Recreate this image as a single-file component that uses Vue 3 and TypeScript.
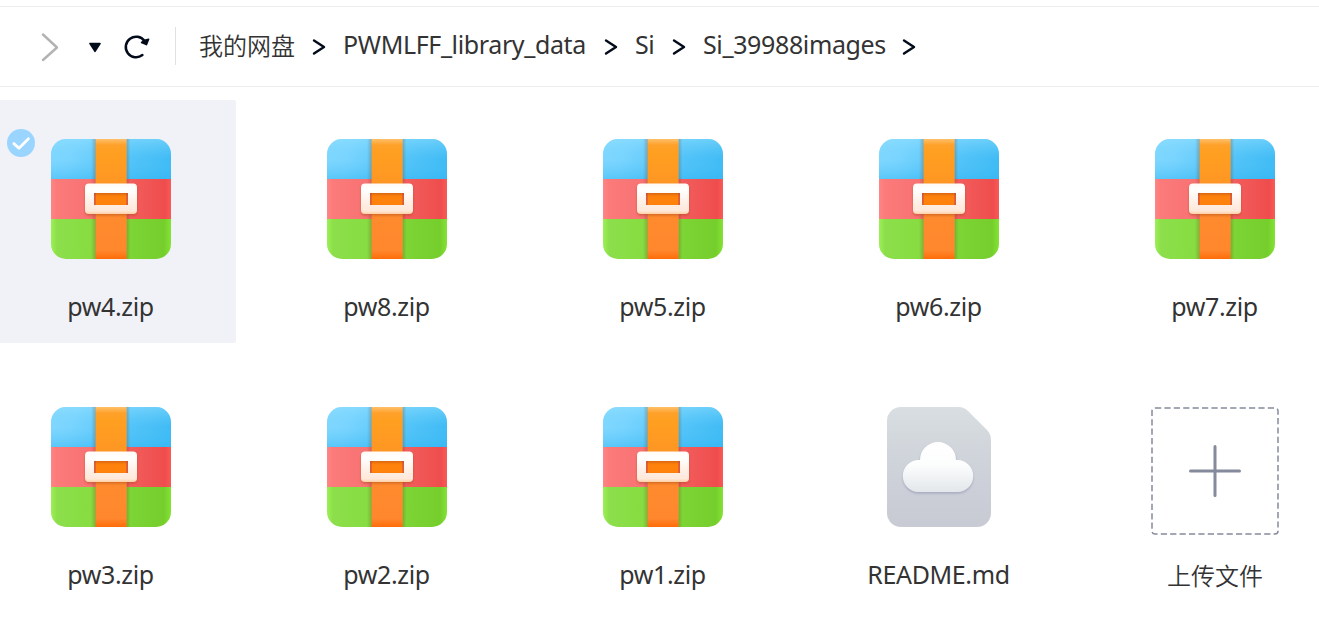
<script setup lang="ts">
interface Crumb {
  label: string
  kind: string
}
interface FileItem {
  name: string
  type: 'zip' | 'doc' | 'upload'
  selected?: boolean
}

const crumbs: Crumb[] = [
  { label: '我的网盘', kind: 'root' },
  { label: 'PWMLFF_library_data', kind: 'library' },
  { label: 'Si', kind: 'element' },
  { label: 'Si_39988images', kind: 'images' },
]

const files: FileItem[] = [
  { name: 'pw4.zip', type: 'zip', selected: true },
  { name: 'pw8.zip', type: 'zip' },
  { name: 'pw5.zip', type: 'zip' },
  { name: 'pw6.zip', type: 'zip' },
  { name: 'pw7.zip', type: 'zip' },
  { name: 'pw3.zip', type: 'zip' },
  { name: 'pw2.zip', type: 'zip' },
  { name: 'pw1.zip', type: 'zip' },
  { name: 'README.md', type: 'doc' },
  { name: '上传文件', type: 'upload' },
]
</script>

<template>
  <div class="page">
    <svg class="defs" width="0" height="0" aria-hidden="true">
      <defs>
        <clipPath id="zipClip"><rect width="120" height="120" rx="15" /></clipPath>
        <linearGradient id="zipBlue" x1="0" y1="0" x2="120" y2="40" gradientUnits="userSpaceOnUse">
          <stop offset="0" stop-color="#86daff" />
          <stop offset=".2" stop-color="#7dd6ff" />
          <stop offset=".5" stop-color="#5bc8fa" />
          <stop offset="1" stop-color="#36b7f3" />
        </linearGradient>
        <linearGradient id="zipBlueV" x1="0" y1="0" x2="0" y2="1">
          <stop offset="0" stop-color="#8fdeff" stop-opacity=".55" />
          <stop offset=".5" stop-color="#62cafa" stop-opacity=".15" />
          <stop offset="1" stop-color="#38b8f4" stop-opacity=".55" />
        </linearGradient>
        <linearGradient id="zipRed">
          <stop offset="0" stop-color="#ff8585" />
          <stop offset=".05" stop-color="#fb7a7a" />
          <stop offset=".35" stop-color="#f87272" />
          <stop offset=".7" stop-color="#f25b5b" />
          <stop offset=".95" stop-color="#ef4d4d" />
          <stop offset="1" stop-color="#f85a57" />
        </linearGradient>
        <linearGradient id="zipGreen">
          <stop offset="0" stop-color="#9cf055" />
          <stop offset=".05" stop-color="#8cdf4b" />
          <stop offset=".35" stop-color="#86dc40" />
          <stop offset=".94" stop-color="#75ce2c" />
          <stop offset="1" stop-color="#84e334" />
        </linearGradient>
        <linearGradient id="zipStrap" x1="0" y1="0" x2="0" y2="1">
          <stop offset="0" stop-color="#ffc06a" />
          <stop offset=".05" stop-color="#ffa12a" />
          <stop offset=".12" stop-color="#ff9f20" />
          <stop offset=".4" stop-color="#ff9524" />
          <stop offset=".65" stop-color="#ff8b2e" />
          <stop offset=".93" stop-color="#ff872d" />
          <stop offset="1" stop-color="#ff6c08" />
        </linearGradient>
        <linearGradient id="zipShadeL"><stop offset="0" stop-color="#653b20" stop-opacity="0" /><stop offset="1" stop-color="#653b20" stop-opacity=".28" /></linearGradient>
        <linearGradient id="zipShadeR"><stop offset="0" stop-color="#653b20" stop-opacity=".28" /><stop offset="1" stop-color="#653b20" stop-opacity="0" /></linearGradient>
        <linearGradient id="zipBuckle" x1="0" y1="0" x2="0" y2="1">
          <stop offset="0" stop-color="#fffaf5" />
          <stop offset=".2" stop-color="#ffffff" />
          <stop offset=".6" stop-color="#fff0e7" />
          <stop offset=".9" stop-color="#ffe8d9" />
          <stop offset="1" stop-color="#ffcfa2" />
        </linearGradient>
        <filter id="buckleShadow" x="-20%" y="-20%" width="140%" height="160%">
          <feDropShadow dx="0" dy="1.5" stdDeviation="1.3" flood-color="#a8400c" flood-opacity=".5" />
        </filter>
        <linearGradient id="docBody" x1="0" y1="0" x2="0" y2="1">
          <stop offset="0" stop-color="#d8dee1" />
          <stop offset=".45" stop-color="#cfd3da" />
          <stop offset="1" stop-color="#c8cad4" />
        </linearGradient>
        <linearGradient id="docCloud" x1="0" y1="0" x2="0" y2="1">
          <stop offset="0" stop-color="#ffffff" />
          <stop offset=".45" stop-color="#fcfdfd" />
          <stop offset="1" stop-color="#e3e7ea" />
        </linearGradient>
        <filter id="cloudShadow" x="-20%" y="-20%" width="140%" height="150%">
          <feDropShadow dx="0" dy="1.6" stdDeviation="1.2" flood-color="#9a9eb8" flood-opacity=".75" />
        </filter>
      </defs>
    </svg>

    <header class="toolbar">
      <svg class="forward" width="20" height="30" viewBox="0 0 20 30">
        <path d="M3 2.5 17 15.5 3 28" />
      </svg>
      <svg class="caret" width="14" height="12" viewBox="0 0 14 12">
        <path d="M2 1.5h10L7 9.3Z" />
      </svg>
      <svg class="reload" width="28" height="26" viewBox="0 0 28 26">
        <path class="arc" d="M19.4 21.1A10.3 10.3 0 1 1 21.5 7" />
        <path class="fill" d="M18.600 8.500 23.400 10.600 25.600 5.200 21.800 6.200Z" />
      </svg>
      <span class="divider"></span>
      <nav class="crumbs">
        <div v-for="c in crumbs" :key="c.label" class="crumb" :class="c.kind">
          <span class="label">{{ c.label }}</span>
          <svg class="sep" width="14" height="18" viewBox="0 0 14 18">
            <path d="M2 2.4 12 9 2 15.6" />
          </svg>
        </div>
      </nav>
    </header>

    <main class="grid">
      <article v-for="f in files" :key="f.name" class="tile" :class="[f.type, { selected: f.selected }]">
        <svg v-if="f.selected" class="check" width="28" height="28" viewBox="0 0 28 28">
          <circle cx="14" cy="14" r="14" />
          <path d="M6.9 14.6 12 19.2 21.4 9.7" />
        </svg>

        <svg v-if="f.type === 'zip'" class="icon" width="120" height="120" viewBox="0 0 120 120">
          <g clip-path="url(#zipClip)">
            <rect width="120" height="40.3" fill="url(#zipBlue)" />
            <rect width="120" height="40.3" fill="url(#zipBlueV)" />
            <rect y="40" width="120" height="40.3" fill="url(#zipRed)" />
            <rect y="80" width="120" height="40" fill="url(#zipGreen)" />
            <rect x="40" width="5" height="120" fill="url(#zipShadeL)" />
            <rect x="75.4" width="4" height="120" fill="url(#zipShadeR)" />
            <rect x="44.6" width="31" height="120" fill="url(#zipStrap)" />
            <rect x="43" y="53.5" width="34" height="13" fill="#ff820c" />
            <path d="M43 54h2v12h-2zM75 54h2v12h-2z" fill="#e5643b" />
          </g>
          <path
            filter="url(#buckleShadow)"
            fill="url(#zipBuckle)"
            fill-rule="evenodd"
            d="M38 44.6H82a4 4 0 0 1 4 4V71a4 4 0 0 1-4 4H38a4 4 0 0 1-4-4V48.600a4 4 0 0 1 4-4ZM43 54V66H77V54Z"
          />
        </svg>

        <svg v-else-if="f.type === 'doc'" class="icon" width="104" height="120" viewBox="0 0 104 120">
          <path
            fill="url(#docBody)"
            d="M14 0H71.500Q77 0 81 4L100 23Q104 27 104 33V106A14 14 0 0 1 90 120H14A14 14 0 0 1 0 106V14A14 14 0 0 1 14 0Z"
          />
          <path
            filter="url(#cloudShadow)"
            fill="url(#docCloud)"
            d="M33 53A18 18 0 0 1 69 53H70.500A15.700 16 0 0 1 70.500 85H31.500A15.700 16 0 0 1 31.500 53Z"
          />
        </svg>

        <svg v-else class="icon" width="128" height="128" viewBox="0 0 128 128">
          <rect class="frame" x="1" y="1" width="126" height="126" rx="3" />
          <path class="plus" d="M64 39.500V88.500M39.500 64H88.500" />
        </svg>

        <p class="name">{{ f.name }}</p>
      </article>
    </main>
  </div>
</template>

<style>
body {
  margin: 0;
  background: #fff;
}
</style>

<style scoped>
.page {
  width: 1319px;
  height: 631px;
  box-sizing: border-box;
  padding-top: 6px;
  overflow: hidden;
  background: #fff;
  color: #333;
  font-family: "Noto Sans", "Noto Sans CJK SC", sans-serif;
  font-size: 25px;
  letter-spacing: -0.37px;
}
.defs {
  display: block;
}
.toolbar {
  display: flex;
  align-items: center;
  box-sizing: border-box;
  height: 81px;
  padding-left: 40px;
  border-top: 1px solid #ededed;
  border-bottom: 1px solid #ededed;
}
.toolbar svg {
  flex: none;
  fill: none;
  stroke: #030b1a;
  stroke-linecap: round;
  stroke-linejoin: round;
}
.toolbar .forward {
  stroke: #b3b3b3;
  stroke-width: 2.4;
  margin-top: 1px;
}
.toolbar .caret {
  margin: 3px 0 0 28px;
  fill: #030b1a;
  stroke-width: 1.6;
}
.toolbar .reload {
  margin-left: 21px;
  stroke-width: 2.5;
}
.toolbar .reload .fill {
  fill: #030b1a;
  stroke-width: 1.6;
}
.divider {
  width: 1px;
  height: 38px;
  margin: -1px 0 0 24px;
  background: #e2e2e2;
}
.crumbs {
  display: flex;
  margin-left: 23px;
}
.crumb {
  display: flex;
  align-items: center;
  height: 36px;
  white-space: nowrap;
}
.label {
  line-height: 36px;
  margin-top: -6px;
}
.toolbar .sep {
  margin: 1px 0 0 auto;
  stroke-width: 2.4;
}
.root {
  width: 127px;
  margin-right: 17px;
}
.root .label,
.upload .name {
  font-family: "Noto Sans CJK SC", sans-serif;
  font-size: 24px;
  font-weight: 350;
  letter-spacing: 0;
}
.root .label {
  margin-top: -4px;
}
.library {
  width: 275px;
  margin-right: 17px;
}
.element {
  width: 51px;
  margin-right: 17px;
}
.images {
  width: 213px;
}
.grid {
  display: grid;
  grid-template-columns: repeat(5, 250px);
  grid-auto-rows: 243px;
  gap: 25px 26px;
  margin: 13px 0 0 -14px;
}
.tile {
  position: relative;
  display: flex;
  flex-direction: column;
  align-items: center;
  box-sizing: border-box;
  padding-top: 39px;
  border-radius: 2px;
}
.selected {
  background: #f1f2f8;
}
.check {
  position: absolute;
  left: 21px;
  top: 29px;
  fill: #9ad5ff;
}
.check path {
  fill: none;
  stroke: #fff;
  stroke-width: 2.8;
  stroke-linecap: round;
  stroke-linejoin: round;
}
.icon {
  display: block;
  overflow: visible;
}
.name {
  margin: 29px 1px 0 0;
  line-height: 36px;
  white-space: nowrap;
}
.upload .name {
  margin: 22px 0 0;
}
.frame {
  fill: none;
  stroke: #858a9c;
  stroke-width: 1.5;
  stroke-dasharray: 6.200 3.200;
}
.plus {
  stroke: #858a9c;
  stroke-width: 3;
  stroke-linecap: round;
}
</style>
